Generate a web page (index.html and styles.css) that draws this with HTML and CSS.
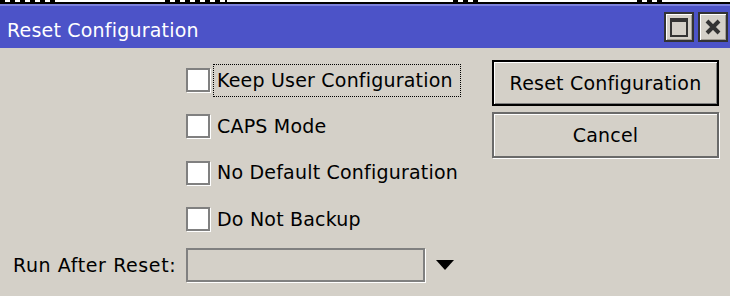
FILE: index.html
```html
<!DOCTYPE html>
<html lang="en">

<head>
    <meta charset="UTF-8">
    <meta name="viewport" content="width=device-width, initial-scale=1.0">
    <title>Reset Configuration</title>
    <link rel="stylesheet" href="styles.css">
</head>

<body>

    <div class="desktop-edge">
        <span class="edge-marks marks-a"></span>
        <span class="edge-marks marks-b"></span>
        <span class="edge-marks marks-c"></span>
        <span class="edge-marks marks-d"></span>
    </div>

    <div class="window">
        <div class="titlebar">
            <span class="titlebar__title">Reset Configuration</span>
            <div class="titlebar__buttons">
                <button class="tb-button" title="Maximize">
                    <svg width="18" height="19" viewBox="0 0 18 19">
                        <rect x="1" y="2" width="16" height="16" fill="none" stroke="#333" stroke-width="2" />
                        <rect x="0" y="0" width="18" height="4" fill="#333" />
                    </svg>
                </button>
                <button class="tb-button" title="Close">
                    <svg width="16" height="16" viewBox="0 0 16 16">
                        <path d="M2 2L14 14M14 2L2 14" stroke="#333" stroke-width="4" />
                    </svg>
                </button>
            </div>
        </div>

        <div class="dialog">
            <div class="options">
                <div class="option-row">
                    <span class="check"></span>
                    <span class="option-row__label option-row__label--focus">Keep User Configuration</span>
                </div>
                <div class="option-row">
                    <span class="check"></span>
                    <span class="option-row__label">CAPS Mode</span>
                </div>
                <div class="option-row">
                    <span class="check"></span>
                    <span class="option-row__label">No Default Configuration</span>
                </div>
                <div class="option-row">
                    <span class="check"></span>
                    <span class="option-row__label">Do Not Backup</span>
                </div>
                <div class="field-row">
                    <span class="field-row__label">Run After Reset:</span>
                    <span class="field"></span>
                    <span class="dropdown-arrow"></span>
                </div>
            </div>

            <div class="actions">
                <button class="btn btn--default">Reset Configuration</button>
                <button class="btn">Cancel</button>
            </div>
        </div>
    </div>

</body>

</html>
```

FILE: styles.css
```css
html,
body {
    margin: 0;
    width: 100%;
    height: 100%;
}

body {
    background: #d4d0c8;
    font-family: "DejaVu Sans", sans-serif;
    font-size: 19px;
    letter-spacing: 0.2px;
    color: #000;
    overflow: hidden;
}

/* bit of the window behind, peeking over the top */
.desktop-edge {
    display: flex;
    height: 2px;
    background: #fff;
    border-bottom: 2px solid #000;
}

.edge-marks {
    height: 2px;
    background: repeating-linear-gradient(90deg, #000 0 5px, #fff 5px 10px);
}

.marks-a {
    width: 57px;
}

.marks-b {
    width: 62px;
    margin-left: 108px;
}

.marks-c {
    width: 27px;
    margin-left: 226px;
}

.marks-d {
    width: 25px;
    margin-left: 157px;
}

.titlebar {
    display: flex;
    align-items: center;
    justify-content: space-between;
    height: 42px;
    border-top: 2px solid #7b80dc;
    background: #4c53c8;
    color: #fff;
}

.titlebar__title {
    padding: 6px 0 0 7px;
    line-height: 23px;
}

.titlebar__buttons {
    display: flex;
    gap: 4px;
    margin-right: 2px;
}

.tb-button {
    display: flex;
    align-items: center;
    justify-content: center;
    width: 30px;
    height: 30px;
    padding: 0;
    border: 2px solid #333;
    background: #d4d0c8;
    box-shadow: inset 1px 1px 0 #fff, inset -1px -1px 0 #a09c94;
}

.dialog {
    display: flex;
}

.options {
    width: 492px;
    padding-top: 9px;
}

.option-row {
    display: flex;
    align-items: center;
    height: 46.33px;
    padding-left: 186px;
}

.check {
    box-sizing: border-box;
    width: 24px;
    height: 24px;
    background: #fff;
    border: 2px solid #808080;
    box-shadow: 1px 1px 0 #fff;
}

.option-row__label {
    margin-left: 3px;
    padding: 4px 3px;
    line-height: 23px;
    border: 1px solid transparent;
    white-space: nowrap;
}

.option-row__label--focus {
    padding-right: 7px;
    border: 1px dotted #000;
}

.field-row {
    display: flex;
    align-items: center;
    height: 46px;
    padding-left: 13px;
}

.field-row__label {
    width: 173px;
    line-height: 23px;
    letter-spacing: 0.6px;
    white-space: nowrap;
}

.field {
    box-sizing: border-box;
    width: 239px;
    height: 34px;
    border: 2px solid #808080;
    box-shadow: 1px 1px 0 #fff;
}

.dropdown-arrow {
    width: 0;
    height: 0;
    margin-left: 11px;
    border-left: 9px solid transparent;
    border-right: 9px solid transparent;
    border-top: 10px solid #000;
}

.actions {
    display: flex;
    flex-direction: column;
    gap: 6px;
    width: 227px;
    padding-top: 12px;
}

.btn {
    box-sizing: border-box;
    height: 46px;
    padding: 0;
    font-family: inherit;
    font-size: 19px;
    letter-spacing: inherit;
    color: #000;
    background: #d4d0c8;
    border: 2px solid #6a6a6a;
    box-shadow: inset 1px 1px 0 #fff, 1px 1px 0 #fff;
}

.btn--default {
    border-color: #000;
    box-shadow: inset 1px 1px 0 #fff, inset -1px -1px 0 #808080;
}
```
